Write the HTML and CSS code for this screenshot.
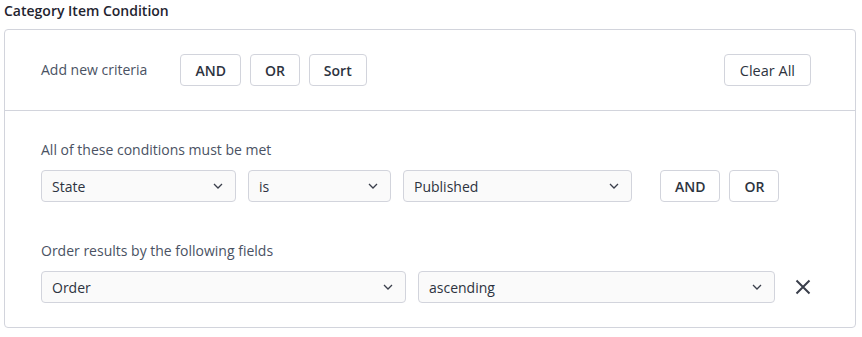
FILE: index.html
```html
<!DOCTYPE html>
<html lang="en">
<head>
    <meta charset="UTF-8">
    <meta name="viewport" content="width=device-width, initial-scale=1.0">
    <title>Category Item Condition</title>
    <link rel="stylesheet" href="styles.css">
</head>
<body>
    <div class="condition">
        <h3 class="title">Category Item Condition</h3>

        <div class="card">
            <div class="toolbar">
                <span class="label">Add new criteria</span>
                <div class="btn-group">
                    <button class="btn">AND</button>
                    <button class="btn">OR</button>
                    <button class="btn">Sort</button>
                </div>
                <button class="btn clear">Clear All</button>
            </div>

            <div class="criteria">
                <div class="group">
                    <div class="group-label">All of these conditions must be met</div>
                    <div class="row">
                        <div class="select w-field"><span>State</span>
                            <svg width="10" height="6" viewBox="0 0 10 6"><path d="M1 1l4 4 4-4" fill="none" stroke="#3a3f4b" stroke-width="1.3"/></svg>
                        </div>
                        <div class="select w-op"><span>is</span>
                            <svg width="10" height="6" viewBox="0 0 10 6"><path d="M1 1l4 4 4-4" fill="none" stroke="#3a3f4b" stroke-width="1.3"/></svg>
                        </div>
                        <div class="select w-value"><span>Published</span>
                            <svg width="10" height="6" viewBox="0 0 10 6"><path d="M1 1l4 4 4-4" fill="none" stroke="#3a3f4b" stroke-width="1.3"/></svg>
                        </div>
                        <div class="btn-group row-actions">
                            <button class="btn">AND</button>
                            <button class="btn">OR</button>
                        </div>
                    </div>
                </div>

                <div class="group">
                    <div class="group-label">Order results by the following fields</div>
                    <div class="row">
                        <div class="select w-order"><span>Order</span>
                            <svg width="10" height="6" viewBox="0 0 10 6"><path d="M1 1l4 4 4-4" fill="none" stroke="#3a3f4b" stroke-width="1.3"/></svg>
                        </div>
                        <div class="select w-dir"><span>ascending</span>
                            <svg width="10" height="6" viewBox="0 0 10 6"><path d="M1 1l4 4 4-4" fill="none" stroke="#3a3f4b" stroke-width="1.3"/></svg>
                        </div>
                        <button class="remove" aria-label="Remove">
                            <svg width="16" height="16" viewBox="0 0 16 16"><path d="M1.5 1.5l13 13M14.5 1.5l-13 13" stroke="#3a3f4b" stroke-width="2"/></svg>
                        </button>
                    </div>
                </div>
            </div>
        </div>
    </div>
</body>
</html>
```

FILE: styles.css
```css
body {
    font-family: "Open Sans", Arial, sans-serif;
    margin: 0;
    padding: 0 4px;
    background-color: #fff;
    color: #2d3340;
}
.title {
    margin: 0;
    padding-top: 1px;
    height: 28px;
    font-size: 14px;
    line-height: 20px;
    font-weight: 600;
    color: #1f2430;
}
.card {
    width: 850px;
    border: 1px solid #d2d4dc;
    border-radius: 4px;
}
.toolbar {
    display: flex;
    align-items: center;
    padding: 24px 44px 24px 36px;
    border-bottom: 1px solid #d2d4dc;
}
.label, .group-label {
    font-size: 14px;
    line-height: 20px;
    color: #4a5263;
}
.btn-group {
    display: flex;
    gap: 9px;
    margin-left: 33px;
}
.btn {
    height: 32px;
    padding: 0 14px;
    font-family: inherit;
    font-size: 14px;
    font-weight: 600;
    color: #2d3340;
    background-color: #fff;
    border: 1px solid #d2d4dc;
    border-radius: 4px;
}
.clear {
    margin-left: auto;
    padding: 0 15px;
    font-weight: 500;
    font-size: 14.5px;
}
.criteria {
    padding: 29px 36px 24px;
}
.group + .group {
    margin-top: 39px;
}
.group-label {
    margin-bottom: 10px;
}
.row {
    display: flex;
    align-items: center;
    gap: 12px;
}
.select {
    box-sizing: border-box;
    height: 32px;
    display: flex;
    align-items: center;
    justify-content: space-between;
    padding: 0 12px 0 10px;
    font-size: 14px;
    color: #2d3340;
    background-color: #fafafa;
    border: 1px solid #d2d4dc;
    border-radius: 4px;
}
.w-field { width: 195px; }
.w-op { width: 143px; }
.w-value { width: 229px; }
.w-order { width: 365px; }
.w-dir { width: 357px; }
.row-actions {
    margin-left: 16px;
}
.remove {
    margin-left: 8px;
    padding: 0;
    width: 16px;
    height: 20px;
    display: flex;
    align-items: center;
    justify-content: center;
    background: none;
    border: 0;
}
```
